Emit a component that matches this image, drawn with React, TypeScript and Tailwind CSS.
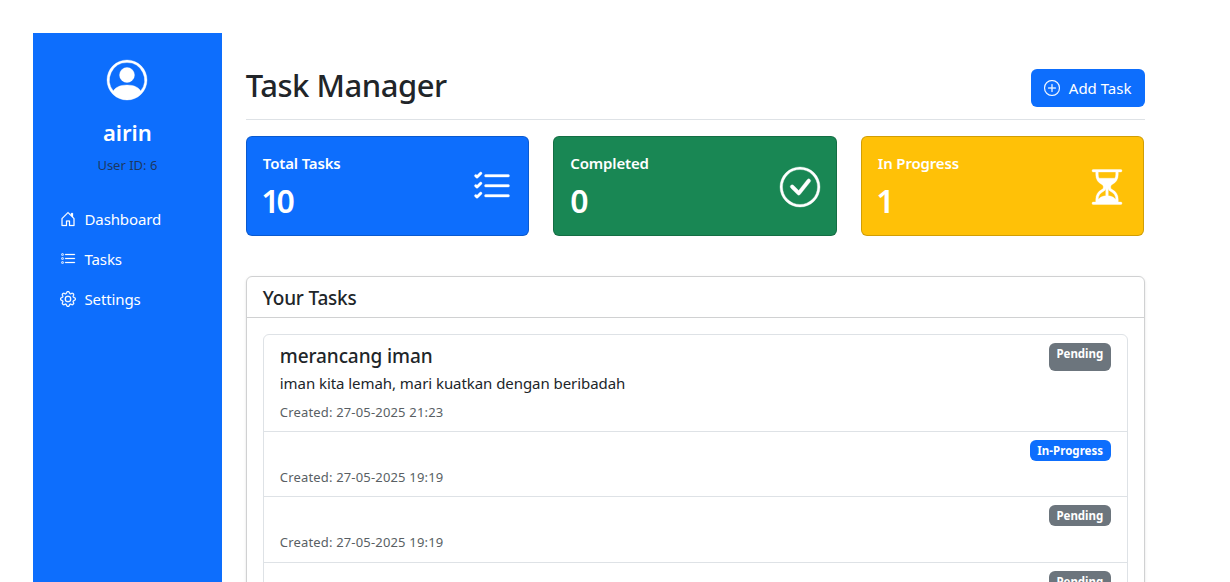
import type { ReactNode } from "react";
import {
  BsCheckCircle,
  BsGear,
  BsHourglassSplit,
  BsHouseDoor,
  BsListCheck,
  BsListTask,
  BsPersonCircle,
  BsPlusCircle,
} from "react-icons/bs";

function NavItem({ icon, children }: { icon: ReactNode; children: ReactNode }) {
  return (
    <a className="flex h-10 items-center pl-[27px] text-[15px] tracking-[-0.12px]">
      <span className="mr-[8.5px] text-base [&_path]:stroke-current [&_path]:[stroke-width:0.25]">{icon}</span>
      <span>{children}</span>
    </a>
  );
}

function StatCard({ label, value, color, icon }: { label: string; value: string; color: string; icon: ReactNode }) {
  return (
    <div className={`flex h-[100px] items-center justify-between rounded-md border border-black/18 px-4 text-white ${color}`}>
      <div>
        <div className="text-[15px] leading-[19px] font-semibold tracking-[-0.15px]">{label}</div>
        <div
          className={`mt-[9px] text-[32px] leading-[37px] font-semibold tracking-[-3.2px] ${
            value.startsWith("1") ? "-ml-[1.5px]" : ""
          }`}
        >
          {value}
        </div>
      </div>
      <span className="pt-0.5 text-[40px] [&_path]:stroke-current [&_path]:[stroke-width:0.14] [&_svg]:overflow-visible">
        {icon}
      </span>
    </div>
  );
}

function Badge({ status, tall }: { status: string; tall?: boolean }) {
  return (
    <span
      className={`rounded-md px-[7.7px] pt-[5px] text-[11.5px] leading-3 font-bold text-white ${
        status === "Pending" ? "bg-[#6c757d] tracking-[-0.05px]" : "bg-[#0d6efd] tracking-[0.03px]"
      } ${tall ? "h-7" : "h-[20.5px]"}`}
    >
      {status}
    </span>
  );
}

function EmptyTask({ status }: { status: string }) {
  return (
    <div className="h-[65.4px] border-t border-[#dee2e6] px-4 pt-2">
      <div className="flex h-[24.5px] items-start justify-end">
        <Badge status={status} />
      </div>
      <div className="mt-[2.5px] text-[13px] leading-[21px] tracking-[0.17px] text-[#595f64]">
        Created: 27-05-2025 19:19
      </div>
    </div>
  );
}

export default function App() {
  return (
    <div className="flex h-[582px] overflow-hidden bg-white pt-[33px] pl-[33px] font-['Noto_Sans',sans-serif] text-[#212529]">
      <aside className="w-[188.8px] shrink-0 bg-[#0d6efd] text-white">
        <div className="flex flex-col items-center pt-[27px]">
          <BsPersonCircle className="size-10 overflow-visible stroke-current [stroke-width:0.14]" />
          <h4 className="mt-[18px] text-[22px] leading-[29px] font-semibold">airin</h4>
          <div className="mt-2 text-[13px] leading-[21px] text-[#212529]/75">User ID: 6</div>
        </div>
        <nav className="mt-[23px]">
          <NavItem icon={<BsHouseDoor />}>Dashboard</NavItem>
          <NavItem icon={<BsListTask />}>Tasks</NavItem>
          <NavItem icon={<BsGear />}>Settings</NavItem>
        </nav>
      </aside>
      <main className="ml-6 w-[899px] pt-9">
        <header className="flex h-[51px] items-start justify-between border-b border-[#dee2e6]">
          <h1 className="text-[31px] leading-[32px] font-medium tracking-[-0.48px]">Task Manager</h1>
          <button className="flex h-[38px] w-[114px] items-center rounded-md bg-[#0d6efd] pl-[13px] text-[15px] text-white">
            <BsPlusCircle className="mr-[9px] size-4 stroke-current [stroke-width:0.2]" />
            <span>Add Task</span>
          </button>
        </header>
        <section className="mt-4 mr-[0.6px] grid grid-cols-3 gap-6">
          <StatCard label="Total Tasks" value="10" color="bg-[#0d6efd]" icon={<BsListCheck />} />
          <StatCard label="Completed" value="0" color="bg-[#198754]" icon={<BsCheckCircle />} />
          <StatCard label="In Progress" value="1" color="bg-[#ffc107]" icon={<BsHourglassSplit />} />
        </section>
        <section className="mt-10 rounded-md border border-[#d0d1d2] pb-4 shadow-sm">
          <h2 className="h-[41px] border-b border-[#d0d1d2] px-4 text-[19px] leading-[42px] font-medium tracking-[-0.2px]">
            Your Tasks
          </h2>
          <div className="mx-4 mt-4 rounded-md border border-[#dee2e6]">
            <div className="flex h-24 justify-between px-4 pt-2">
              <div>
                <h3 className="text-[19px] leading-[26px] font-medium tracking-[-0.1px]">merancang iman</h3>
                <p className="text-[15px] leading-[28px] tracking-[-0.06px]">
                  iman kita lemah, mari kuatkan dengan beribadah
                </p>
                <div className="text-[13px] leading-[30px] tracking-[0.17px] text-[#595f64]">
                  Created: 27-05-2025 21:23
                </div>
              </div>
              <Badge status="Pending" tall />
            </div>
            <EmptyTask status="In-Progress" />
            <EmptyTask status="Pending" />
            <EmptyTask status="Pending" />
          </div>
        </section>
      </main>
    </div>
  );
}
